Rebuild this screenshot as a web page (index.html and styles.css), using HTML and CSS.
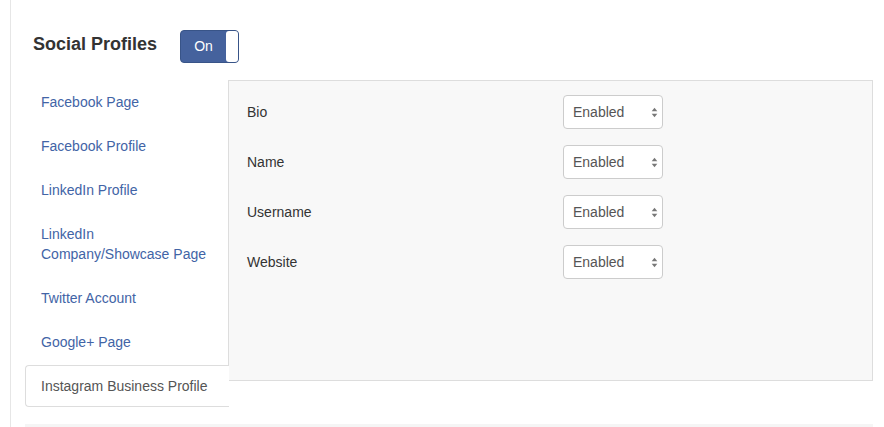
FILE: index.html
```html
<!DOCTYPE html>
<html>
<head>
<meta charset="utf-8">
<link rel="stylesheet" href="styles.css">
</head>
<body>
<div class="page">
  <div class="header">
    <h2 class="title">Social Profiles</h2>
    <div class="toggle"><span class="toggle-label">On</span><span class="knob"></span></div>
  </div>
  <div class="body">
    <ul class="nav">
      <li><a class="nav-item">Facebook Page</a></li>
      <li><a class="nav-item">Facebook Profile</a></li>
      <li><a class="nav-item">LinkedIn Profile</a></li>
      <li><a class="nav-item">LinkedIn<br>Company/Showcase Page</a></li>
      <li><a class="nav-item">Twitter Account</a></li>
      <li><a class="nav-item">Google+ Page</a></li>
      <li><a class="nav-item active">Instagram Business Profile</a></li>
    </ul>
    <div class="panel">
      <div class="row"><span class="label">Bio</span><div class="select"><span>Enabled</span><svg class="arrows" width="7" height="11" viewBox="0 0 7 11"><path d="M3.5 0.8 L6.3 4.3 L0.7 4.3 Z" fill="#777"/><path d="M0.7 6.7 L6.3 6.7 L3.5 10.2 Z" fill="#777"/></svg></div></div>
      <div class="row"><span class="label">Name</span><div class="select"><span>Enabled</span><svg class="arrows" width="7" height="11" viewBox="0 0 7 11"><path d="M3.5 0.8 L6.3 4.3 L0.7 4.3 Z" fill="#777"/><path d="M0.7 6.7 L6.3 6.7 L3.5 10.2 Z" fill="#777"/></svg></div></div>
      <div class="row"><span class="label">Username</span><div class="select"><span>Enabled</span><svg class="arrows" width="7" height="11" viewBox="0 0 7 11"><path d="M3.5 0.8 L6.3 4.3 L0.7 4.3 Z" fill="#777"/><path d="M0.7 6.7 L6.3 6.7 L3.5 10.2 Z" fill="#777"/></svg></div></div>
      <div class="row"><span class="label">Website</span><div class="select"><span>Enabled</span><svg class="arrows" width="7" height="11" viewBox="0 0 7 11"><path d="M3.5 0.8 L6.3 4.3 L0.7 4.3 Z" fill="#777"/><path d="M0.7 6.7 L6.3 6.7 L3.5 10.2 Z" fill="#777"/></svg></div></div>
    </div>
  </div>
  <div class="footer-band"></div>
</div>
</body>
</html>
```

FILE: styles.css
```css
html, body {
  margin: 0;
  padding: 0;
  background: #fff;
}
body {
  font-family: "Liberation Sans", Arial, Helvetica, sans-serif;
  font-size: 14px;
  color: #333;
  overflow: hidden;
}
.page {
  margin-left: 10px;
  border-left: 1px solid #e6e6e6;
  min-height: 427px;
  padding: 0 11px 0 14px;
  box-sizing: border-box;
}
.header {
  display: flex;
  align-items: flex-start;
  padding: 30px 0 0 8px;
  height: 33px;
  margin-bottom: 17px;
}
.title {
  margin: 4px 23px 0 0;
  font-size: 18px;
  line-height: 20px;
  font-weight: bold;
  color: #333;
}
.toggle {
  width: 59px;
  height: 33px;
  box-sizing: border-box;
  background: #45629d;
  border: 1px solid #385488;
  border-radius: 4px;
  display: flex;
  align-items: stretch;
  padding: 0;
}
.toggle-label {
  flex: 1;
  color: #fff;
  font-size: 14px;
  line-height: 31px;
  text-align: center;
}
.knob {
  width: 12px;
  background: #fff;
  border-radius: 3px;
}
.body {
  display: flex;
  align-items: flex-start;
}
.nav {
  list-style: none;
  margin: 1px 0 0 0;
  padding: 0;
  width: 204px;
  flex: none;
  position: relative;
  z-index: 1;
}
.nav li {
  margin-bottom: 2px;
}
.nav-item {
  display: block;
  padding: 10px 15px;
  line-height: 20px;
  border: 1px solid transparent;
  border-right: 0;
  border-radius: 4px 0 0 4px;
  color: #4264a6;
  text-decoration: none;
}
.nav-item.active {
  background: #fff;
  border-color: #ddd;
  color: #555;
}
.panel {
  flex: 1;
  margin-left: -1px;
  height: 301px;
  box-sizing: border-box;
  background: #f8f8f8;
  border: 1px solid #ddd;
  padding: 14px 18px;
  display: flex;
  flex-direction: column;
  gap: 16px;
}
.row {
  display: grid;
  grid-template-columns: 316px 100px;
  align-items: center;
  height: 34px;
}
.label {
  color: #333;
  font-size: 14px;
}
.select {
  height: 34px;
  box-sizing: border-box;
  background: #fff;
  border: 1px solid #ccc;
  border-radius: 4px;
  display: flex;
  align-items: center;
  justify-content: space-between;
  padding: 0 4px 0 9px;
  color: #555;
  font-size: 14px;
}
.arrows {
  display: block;
}
.footer-band {
  margin-top: 15px;
  height: 6px;
  background: #f5f5f5;
}
```
